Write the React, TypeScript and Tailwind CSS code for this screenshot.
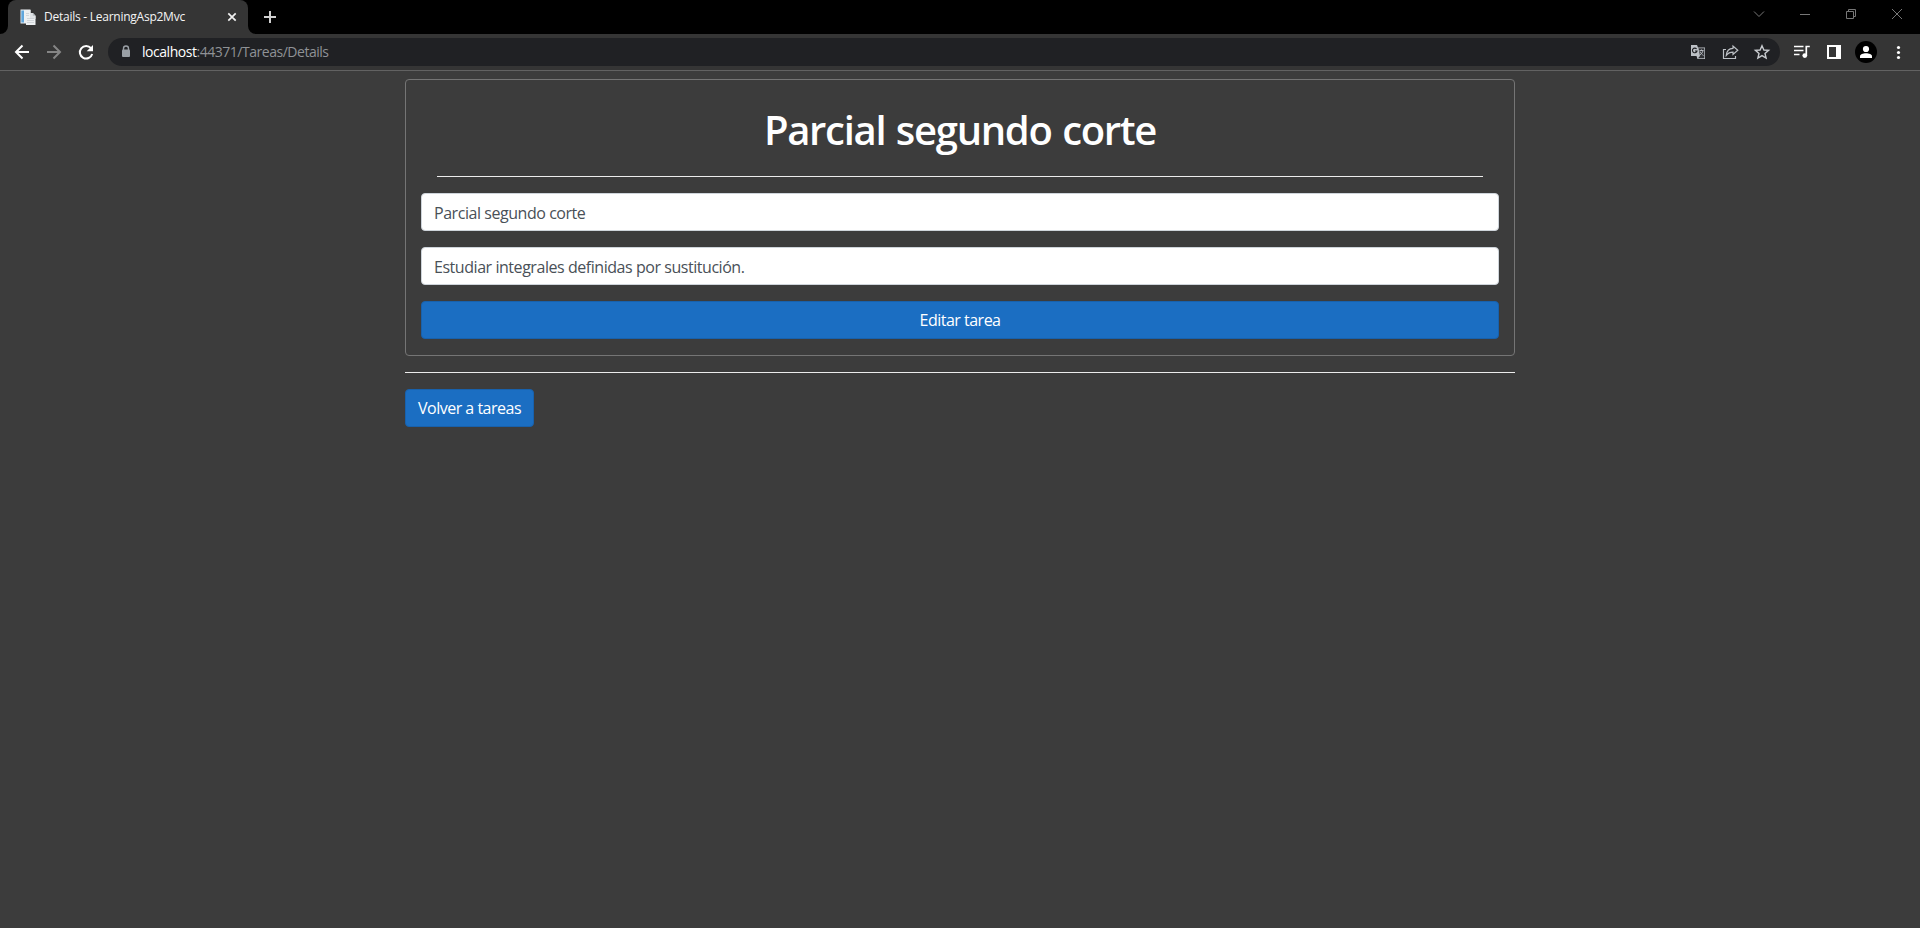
import React from "react";

function TabStrip() {
  return (
    <div className="flex h-[34px] items-start justify-between bg-black">
      <div className="flex h-[34px] items-end">
        <svg className="h-[34px] w-2" viewBox="0 0 8 34">
          <path d="M8 26a8 8 0 0 1-8 8h8z" fill="#353535" />
        </svg>
        <div className="flex h-[34px] w-[240px] items-center rounded-t-lg bg-[#353535] pl-3 pr-2">
          <svg className="h-4 w-4 shrink-0" viewBox="0 0 16 16">
            <path d="M.5.500h10V4h-4v10.500H.500z" fill="#eef2f5" />
            <path d="M1.300 1.500H4v12H1.300z" fill="#5fa6dc" />
            <path d="M4.500 1h6v3l2.500.300L15.500 7v9H6v-2H4.500z" fill="#eceff1" />
            <path d="M10 4h2.800l2.700 2.800V10H10z" fill="#dfe2e5" />
            <path d="M12.800 4v2.800h2.700z" fill="#b4babf" />
            <path d="M7 9.500h7M7 11.500h7M7 13.500h7M6 4.500h3M6 6.500h3" stroke="#c9ced3" strokeWidth=".8" />
          </svg>
          <span className="ml-2 flex-1 whitespace-nowrap text-[12px] leading-4 tracking-[-0.25px] text-[#f4f4f4]">
            Details - LearningAsp2Mvc
          </span>
          <svg className="h-4 w-4 shrink-0" viewBox="0 0 16 16">
            <path d="m4.300 4.300 7.400 7.400M11.700 4.300l-7.400 7.400" stroke="#f1f1f1" strokeWidth="1.700" />
          </svg>
        </div>
        <svg className="h-[34px] w-2" viewBox="0 0 8 34">
          <path d="M0 26a8 8 0 0 0 8 8H0z" fill="#353535" />
        </svg>
        <svg className="ml-[7px] h-[34px] w-[14px]" viewBox="0 0 14 34">
          <path d="M1 17h12M7 11v12" stroke="#d0d0d0" strokeWidth="2" />
        </svg>
      </div>
      <svg className="h-[34px] w-[184px]" viewBox="0 0 184 34" fill="none" stroke="#777" strokeWidth="1">
        <path d="m18 11.500 5 5 5-5" />
        <path d="M64 14.500h10" />
        <path d="M110.500 11.500h7v7h-7zM112.500 11.500v-2h7v7h-2" />
        <path d="m156 9 10 10M166 9l-10 10" />
      </svg>
    </div>
  );
}

function Toolbar() {
  return (
    <div className="flex h-9 items-center bg-[#353535]">
      <svg className="h-9 w-[108px] shrink-0" viewBox="0 0 108 36" fill="none" strokeWidth="2">
        <path d="M29 18H16.500M22.500 11.500 16 18l6.500 6.500" stroke="#fff" />
        <path d="M47 18h12.500M53.500 11.500 60 18l-6.500 6.500" stroke="#858585" />
        <path d="M91 14.200A6.300 6.300 0 1 0 92.200 20" stroke="#fff" />
        <path d="M93 11v6.300h-6.300z" fill="#fff" />
      </svg>
      <div className="flex h-7 flex-1 items-center rounded-full bg-[#202124] pl-[13px] pr-[9px]">
        <svg className="h-4 w-[10px]" viewBox="0 0 10 16">
          <path d="M2.500 6V4.500a2.500 2.500 0 0 1 5 0V6" fill="none" stroke="#9aa0a6" strokeWidth="1.400" />
          <rect x="1" y="5.500" width="8" height="7.500" rx="1" fill="#9aa0a6" />
        </svg>
        <span className="ml-[11px] flex-1 whitespace-nowrap text-[14px] leading-5 tracking-[-0.47px] text-[#8f9296]">
          <span className="text-white">localhost</span>:44371/Tareas/Details
        </span>
        <svg className="h-7 w-[80px]" viewBox="0 0 80 28" fill="none">
          <path d="M0 7h6l1 2.500h7V21H6.500L5.500 18H0z" fill="#bdc1c6" />
          <path d="M7.500 10.200h5.800v10H7l2-2.300z" fill="#303236" />
          <path d="M8.500 12.500h4M10.500 11.500v1M12 12.500c-.5 2-1.500 3.500-3 4.500M9 13.500c1 2 2 3 3.500 4" stroke="#bdc1c6" strokeWidth=".9" />
          <path d="M5.600 11A2.300 2.300 0 1 0 6 13H4" stroke="#202124" strokeWidth="1.100" />
          <path d="M35 11.500h-2.500V20.500h12V18" stroke="#bdc1c6" strokeWidth="1.200" />
          <path d="M42 8v2.300c-4 .2-6.400 2.700-6.700 7 1.700-2.200 3.800-3.200 6.700-3.200v2.400l4.800-4.300z" stroke="#bdc1c6" strokeWidth="1.200" />
          <path d="m71 7.700 1.900 4.300 4.700.4-3.600 3.100 1.100 4.600-4.100-2.500-4.100 2.500 1.100-4.600-3.600-3.100 4.700-.4z" stroke="#c8cbcf" strokeWidth="1.400" />
        </svg>
      </div>
      <svg className="h-9 w-[140px] shrink-0" viewBox="0 0 140 36">
        <path d="M14 12.500h9.500M14 16.500h9.500M14 20.500h5.500M29.800 12.500h-3.500v9" stroke="#fff" strokeWidth="1.700" fill="none" />
        <circle cx="24.800" cy="21.600" r="2.400" fill="#fff" />
        <path d="M47 11h14v14H47zM49 13v10h7V13z" fill="#fff" fillRule="evenodd" />
        <circle cx="86" cy="18" r="11" fill="#000" />
        <circle cx="86" cy="15" r="3.100" fill="#fff" />
        <path d="M80 24v-1.800c0-4 12-4 12 0V24z" fill="#fff" />
        <circle cx="118.500" cy="13.500" r="1.600" fill="#fff" />
        <circle cx="118.500" cy="18.500" r="1.600" fill="#fff" />
        <circle cx="118.500" cy="23.500" r="1.600" fill="#fff" />
      </svg>
    </div>
  );
}

function Field({ value }: { value: string }) {
  return (
    <div className="mb-4 h-[38px] rounded border border-[#ced4da] bg-white px-3 pt-[7px] text-[16px] leading-6 tracking-[-0.45px] text-[#495057]">
      {value}
    </div>
  );
}

export default function App() {
  return (
    <div className="flex h-[928px] flex-col bg-[#3c3c3c] font-['Open_Sans','Noto_Sans',sans-serif]">
      <TabStrip />
      <Toolbar />
      <div className="h-px bg-[#626262]" />
      <main className="mx-auto w-[1110px] pt-2">
        <section className="h-[277px] rounded border border-[#757575] px-[15px]">
          <h1 className="mx-4 h-[97px] border-b border-[#ececec] pt-[26px] text-center text-[40px] font-semibold leading-[48px] tracking-[-1.3px] text-white [word-spacing:1.5px]">
            Parcial segundo corte
          </h1>
          <div className="h-4" />
          <Field value="Parcial segundo corte" />
          <Field value="Estudiar integrales definidas por sustitución." />
          <button className="block h-[38px] w-full rounded border border-[#1861ac] bg-[#1b6ec2] text-[16px] leading-6 tracking-[-0.5px] text-white">
            Editar tarea
          </button>
        </section>
        <hr className="mt-4 border-[#ececec]" />
        <button className="mt-4 block h-[38px] w-[129px] whitespace-nowrap rounded border border-[#1861ac] bg-[#1b6ec2] text-[16px] leading-6 tracking-[-0.5px] text-white">
          Volver a tareas
        </button>
      </main>
    </div>
  );
}
